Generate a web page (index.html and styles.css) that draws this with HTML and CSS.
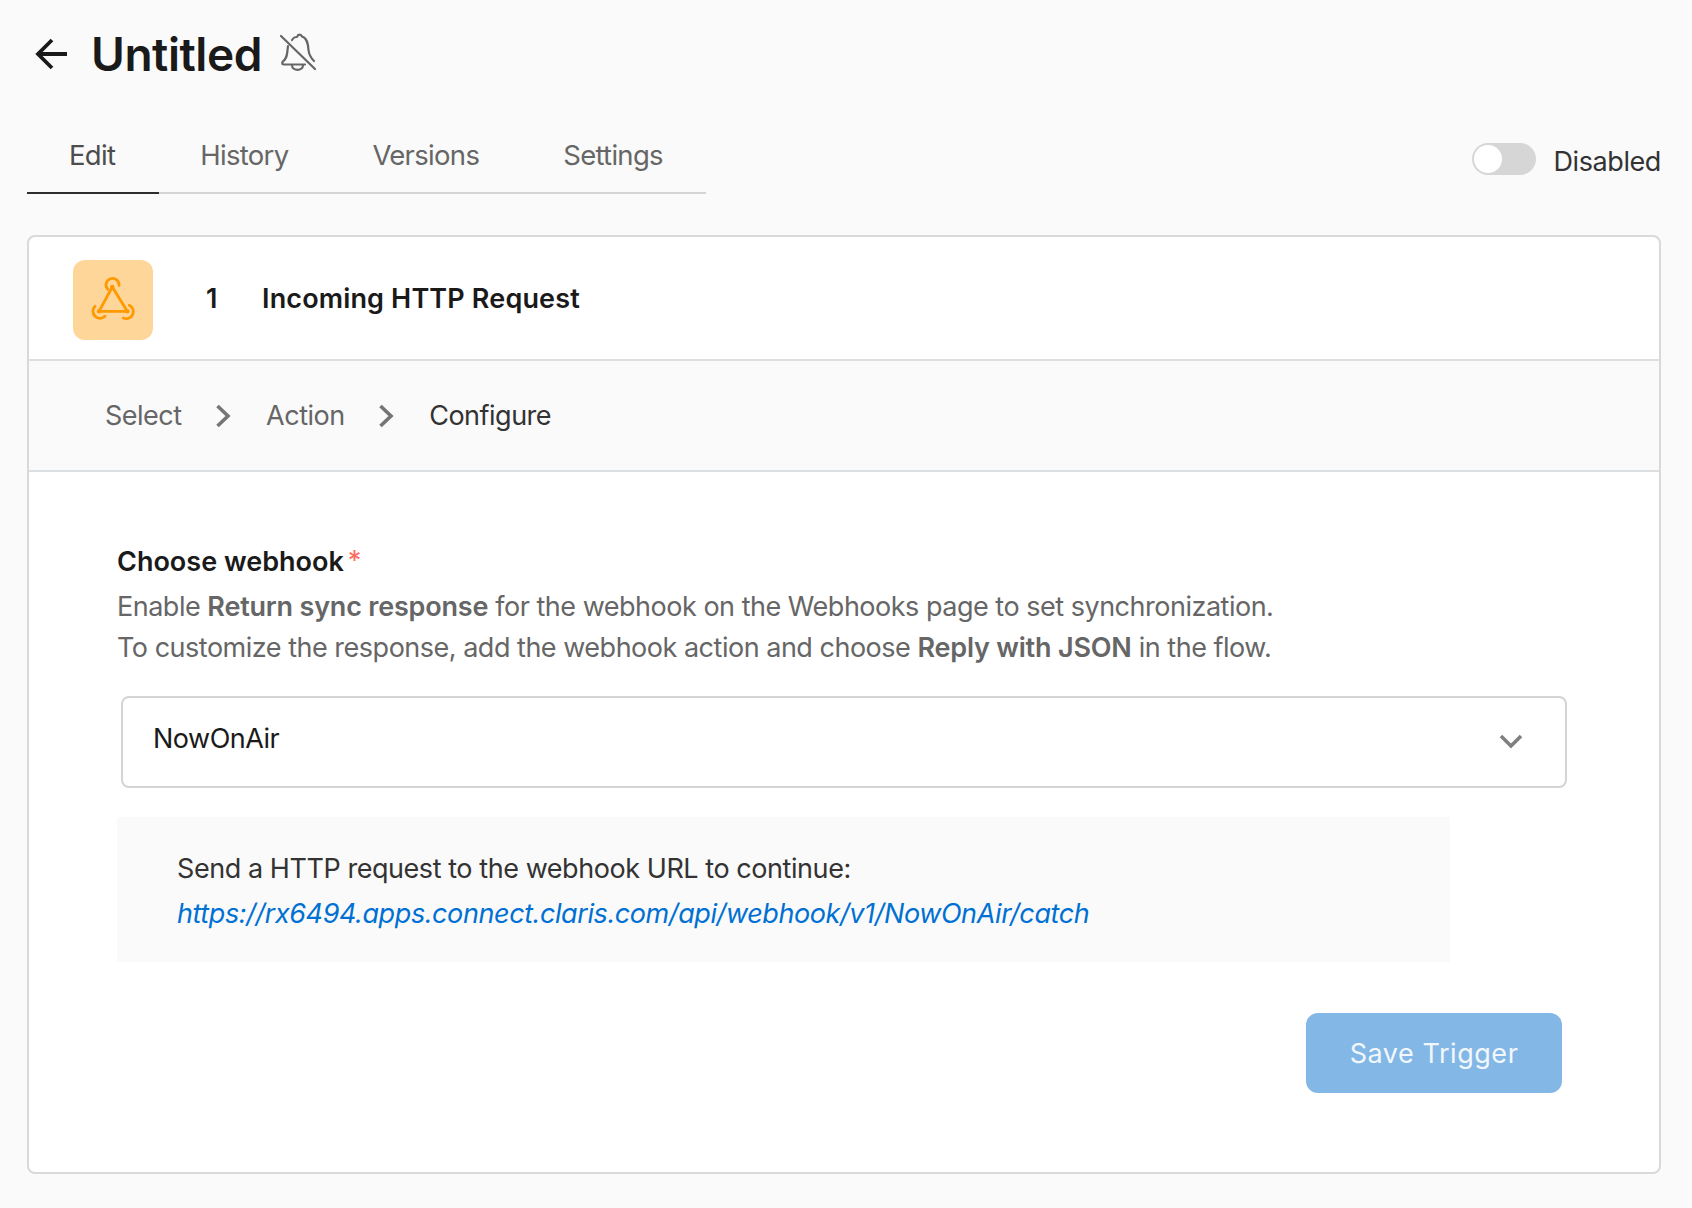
FILE: index.html
```html
<!DOCTYPE html>
<html lang="en">
<head>
<meta charset="utf-8">
<title>Untitled</title>
<link rel="stylesheet" href="styles.css">
</head>
<body>
<header class="title-row">
  <svg class="back" viewBox="0 0 34 32" width="34" height="32"><path d="M32 16H3M17 2 3 16l14 14" fill="none" stroke="#1a1a1a" stroke-width="3.800"/></svg>
  <h1 class="title">Untitled</h1>
  <svg class="bell" viewBox="0 0 38 38" width="38" height="38"><g fill="none" stroke="#666" stroke-width="2.200" stroke-linejoin="round" stroke-linecap="round"><path d="M8 13C7 19 8 25 2.500 29Q1.500 31.500 4 31.500H25"/><path d="M12 7C14 4 15 4 17 4C18 1 21 1 22 3.500C27 5 28 10 28.500 17C29 22 31 25 34 28"/><path d="M12 32C12 38.500 23 38.500 23 32"/><path d="M1 3 35 36"/></g></svg>
</header>
<div class="tab-row">
  <nav class="tabs">
    <a class="tab active">Edit</a>
    <a class="tab">History</a>
    <a class="tab">Versions</a>
    <a class="tab">Settings</a>
  </nav>
  <div class="status">
    <span class="toggle"><span class="knob"></span></span>
    <span class="status-label">Disabled</span>
  </div>
</div>
<main class="card">
  <div class="card-head">
    <span class="app-icon">
      <svg viewBox="0 0 48 48" width="48" height="48"><g fill="none" stroke="#ff9900" stroke-width="2.800" stroke-linecap="round" stroke-linejoin="round"><path d="M23.300 11 10 35.300H38.300L23.300 11"/><path d="M18.700 13.300A6.500 6.500 0 1 1 30 9.300"/><path d="M6 30.300A6.500 6.500 0 1 0 16 40.300"/><path d="M40.300 29.300A6.500 6.500 0 1 1 34.300 42"/></g><g fill="#ff9900"><circle cx="23.300" cy="11" r="2.200"/><circle cx="10" cy="35.300" r="2.200"/><circle cx="38.300" cy="35.300" r="2.200"/></g></svg>
    </span>
    <span class="step-no">1</span>
    <span class="step-name">Incoming HTTP Request</span>
  </div>
  <div class="crumbs">
    <span class="crumb">Select</span>
    <svg class="chev" viewBox="0 0 16 24" width="16" height="24"><path d="M2.500 2 13 12 2.500 22" fill="none" stroke="#757575" stroke-width="3.600"/></svg>
    <span class="crumb">Action</span>
    <svg class="chev" viewBox="0 0 16 24" width="16" height="24"><path d="M2.500 2 13 12 2.500 22" fill="none" stroke="#757575" stroke-width="3.600"/></svg>
    <span class="crumb current">Configure</span>
  </div>
  <section class="body">
    <div class="field-label">Choose webhook<span class="req">*</span></div>
    <p class="desc">Enable <b>Return sync response</b> for the webhook on the Webhooks page to set synchronization.<br>To customize the response, add the webhook action and choose <b>Reply with JSON</b> in the flow.</p>
    <div class="select">
      <span class="select-value">NowOnAir</span>
      <svg class="select-arrow" viewBox="0 0 24 16" width="24" height="16"><path d="M2 3 12 13 22 3" fill="none" stroke="#808080" stroke-width="3.600"/></svg>
    </div>
    <div class="notice">
      <div class="notice-text">Send a HTTP request to the webhook URL to continue:</div>
      <a class="notice-link">https://rx6494.apps.connect.claris.com/api/webhook/v1/NowOnAir/catch</a>
    </div>
    <div class="actions"><button class="save">Save Trigger</button></div>
  </section>
</main>
</body>
</html>
```

FILE: styles.css
```css
* { box-sizing: border-box; }
html, body { margin: 0; }
body {
  height: 1208px;
  padding: 0 31px 0 27px;
  background: #fafafa;
  font-family: Inter, "Liberation Sans", sans-serif;
  overflow: hidden;
}
.title-row { display: flex; align-items: center; height: 108px; padding-left: 8px; }
.back { flex: none; margin-right: 22px; }
.title { margin: 0; font-size: 46px; font-weight: 600; line-height: 56px; color: #1a1a1a; letter-spacing: -0.45px; }
.bell { margin: 0 0 4px 18px; flex: none; }
.tab-row { display: flex; justify-content: space-between; align-items: flex-start; height: 127px; }
.tabs { display: flex; width: 679px; height: 86px; border-bottom: 2px solid #d4d4d4; }
.tab { padding: 11px 42px 0; height: 86px; line-height: 72px; font-size: 27.500px; color: #666; letter-spacing: -0.7px; }
.tab.active { margin-right: -1px; padding: 11px 44px 0 42px; color: #4d4d4d; border-bottom: 2px solid #2e2e2e; }
.status { display: flex; align-items: flex-start; margin-top: 35px; }
.toggle { width: 64px; height: 32px; border-radius: 16px; background: #d6d6d6; padding: 2px; }
.knob { display: block; width: 28px; height: 28px; border-radius: 50%; background: #fff; }
.status-label { margin-left: 17px; padding-top: 3px; line-height: 32px; font-size: 27px; color: #333; letter-spacing: -0.4px; }
.card { height: 939px; background: #fff; border: 2px solid #d9d9d9; border-radius: 8px; overflow: hidden; }
.card-head { display: flex; align-items: center; height: 124px; padding: 4px 0 0 44px; border-bottom: 2px solid #dcdfe2; }
.app-icon { display: flex; align-items: center; justify-content: center; width: 80px; height: 80px; border-radius: 12px; background: #ffd699; }
.step-no { margin: 0 0 4px 53px; width: 56px; font-size: 27px; font-weight: 600; color: #1a1a1a; }
.step-name { margin-bottom: 4px; font-size: 27px; font-weight: 600; color: #1a1a1a; letter-spacing: 0.15px; }
.crumbs { display: flex; align-items: center; height: 111px; padding-left: 76px; background: #fafafa; border-bottom: 2px solid #dcdfe2; }
.crumb { font-size: 27px; color: #666; letter-spacing: -0.5px; }
.crumb.current { color: #333; }
.chev { margin: 0 35.500px 0 33px; }
.body { padding: 70px 0 0 88px; }
.field-label { font-size: 27px; font-weight: 600; line-height: 40px; color: #1a1a1a; }
.req { color: #ff6b5e; font-weight: 400; margin-left: 4px; position: relative; top: -1px; }
.desc { margin: 4px 0 0; font-size: 27px; line-height: 41px; color: #666; letter-spacing: -0.49px; }
.desc b { font-weight: 600; letter-spacing: -0.2px; }
.select { display: flex; align-items: center; justify-content: space-between; width: 1446px; height: 92px; margin: 28px 0 0 4px; padding: 0 42px 0 30px; border: 2px solid #d4d4d4; border-radius: 8px; }
.select-value { margin-bottom: 8px; font-size: 27px; color: #1a1a1a; letter-spacing: -0.5px; }
.select-arrow { margin-bottom: 2px; }
.notice { width: 1333px; height: 145px; margin-top: 29px; padding: 29px 0 0 60px; background: #fafafa; font-size: 27px; line-height: 45px; letter-spacing: -0.44px; }
.notice-text { color: #333; }
.notice-link { display: block; color: #0070d2; font-style: italic; letter-spacing: -0.41px; }
.actions { display: flex; justify-content: flex-end; width: 1445px; margin-top: 51px; }
.save { width: 256px; height: 80px; border: 0; border-radius: 12px; background: #83b7e6; color: #f2f7fc; font: 400 27px Inter, "Liberation Sans", sans-serif; letter-spacing: 0.55px; }
```
